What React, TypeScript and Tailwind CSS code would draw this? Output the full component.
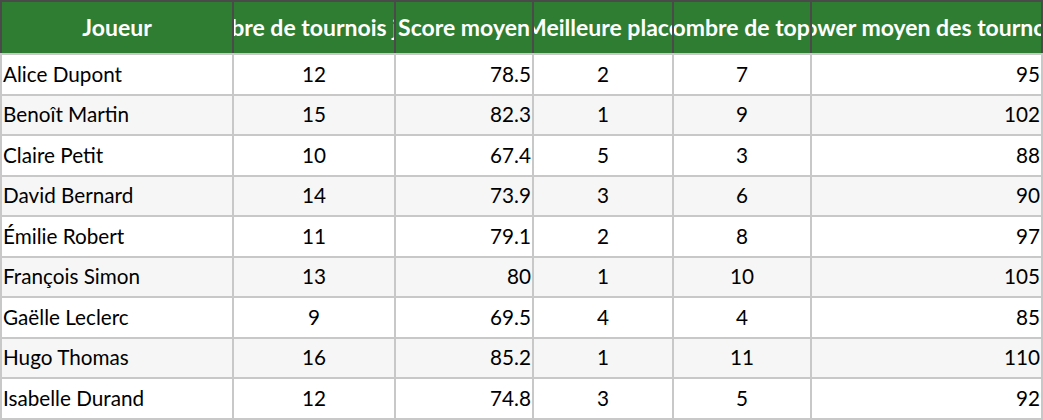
import React from "react";

type Row = {
  name: string;
  tournois: number;
  score: number;
  best: number;
  top: number;
  power: number;
};

const rows: Row[] = [
  { name: "Alice Dupont", tournois: 12, score: 78.5, best: 2, top: 7, power: 95 },
  { name: "Benoît Martin", tournois: 15, score: 82.3, best: 1, top: 9, power: 102 },
  { name: "Claire Petit", tournois: 10, score: 67.4, best: 5, top: 3, power: 88 },
  { name: "David Bernard", tournois: 14, score: 73.9, best: 3, top: 6, power: 90 },
  { name: "Émilie Robert", tournois: 11, score: 79.1, best: 2, top: 8, power: 97 },
  { name: "François Simon", tournois: 13, score: 80, best: 1, top: 10, power: 105 },
  { name: "Gaëlle Leclerc", tournois: 9, score: 69.5, best: 4, top: 4, power: 85 },
  { name: "Hugo Thomas", tournois: 16, score: 85.2, best: 1, top: 11, power: 110 },
  { name: "Isabelle Durand", tournois: 12, score: 74.8, best: 3, top: 5, power: 92 },
];

const headers = [
  { label: "Joueur", w: "w-[232px]" },
  { label: "Nombre de tournois joués", w: "w-[162px]" },
  { label: "Score moyen", w: "w-[138px]" },
  { label: "Meilleure place", w: "w-[140px]" },
  { label: "Nombre de top 3", w: "w-[138px]" },
  { label: "Power moyen des tournois", w: "w-[233px] border-r-2" },
];

const HeaderCell = ({ label, w }: { label: string; w: string }) => (
  <div className={`${w} h-full border-l-2 border-[#4a4a4a] flex items-center justify-center overflow-hidden`}>
    <span className="shrink-0 whitespace-nowrap font-bold text-white text-[23px]">{label}</span>
  </div>
);

const Cell = ({
  w,
  align,
  children,
}: {
  w: string;
  align: "left" | "center" | "right";
  children: React.ReactNode;
}) => {
  const a =
    align === "left" ? "justify-start pl-[1px]" : align === "right" ? "justify-end pr-[1px]" : "justify-center";
  return (
    <div className={`${w} h-full border-l-2 border-[#c8c8c8] flex items-center overflow-hidden ${a}`}>
      <span className="shrink-0 whitespace-nowrap">{children}</span>
    </div>
  );
};

export default function App() {
  return (
    <div className="w-[1043px] h-[420px] bg-white overflow-hidden text-[20.7px] text-black font-['Lato','Liberation_Sans',sans-serif]">
      <div className="flex h-[53px] bg-[#2e7d32] border-t-2 border-[#4a4a4a]">
        {headers.map((h) => (
          <HeaderCell key={h.label} label={h.label} w={h.w} />
        ))}
      </div>
      {rows.map((r, i) => (
        <div
          key={r.name}
          className={`flex h-[40.5px] border-t-2 border-[#c8c8c8] ${i % 2 === 1 ? "bg-[#f6f6f6]" : "bg-white"}`}
        >
          <Cell w="w-[232px]" align="left">{r.name}</Cell>
          <Cell w="w-[162px]" align="center">{r.tournois}</Cell>
          <Cell w="w-[138px]" align="right">{r.score}</Cell>
          <Cell w="w-[140px]" align="center">{r.best}</Cell>
          <Cell w="w-[138px]" align="center">{r.top}</Cell>
          <Cell w="w-[233px] border-r-2" align="right">{r.power}</Cell>
        </div>
      ))}
      <div className="h-[2px] bg-[#c8c8c8]" />
    </div>
  );
}
